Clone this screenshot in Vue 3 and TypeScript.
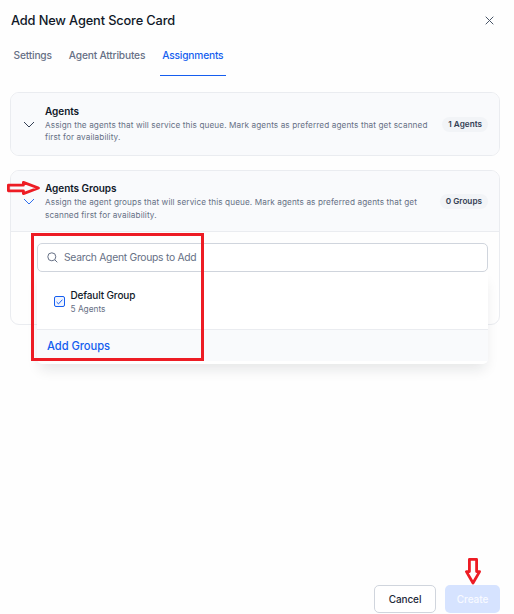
<script setup lang="ts">
import { ref } from 'vue'

const tabs = ['Settings', 'Agent Attributes', 'Assignments']
const activeTab = ref('Assignments')
const selected = ref(true)
</script>

<template>
  <main class="dialog">
    <header class="top">
      <h1>Add New Agent Score Card</h1>
      <button class="close" aria-label="Close">
        <svg width="9" height="9" viewBox="0 0 9 9"><path d="M.7.7l7.6 7.6M8.3.7L.7 8.3" /></svg>
      </button>
    </header>

    <nav class="tabs">
      <button
        v-for="tab in tabs"
        :key="tab"
        class="tab"
        :class="{ active: tab === activeTab }"
        @click="activeTab = tab"
      >{{ tab }}</button>
    </nav>

    <section class="card agents">
      <div class="card-head">
        <svg class="chevron" width="12" height="7" viewBox="0 0 12 7"><path d="M1 1l5 5 5-5" /></svg>
        <div class="info">
          <h2>Agents</h2>
          <p>Assign the agents that will service this queue. Mark agents as preferred agents that get scanned<br />first for availability.</p>
        </div>
        <span class="badge">1 Agents</span>
      </div>
    </section>

    <section class="card groups">
      <div class="card-head">
        <svg class="chevron" width="12" height="7" viewBox="0 0 12 7"><path d="M1 1l5 5 5-5" /></svg>
        <div class="info">
          <h2>Agents Groups</h2>
          <p>Assign the agent groups that will service this queue. Mark agents as preferred agents that get<br />scanned first for availability.</p>
        </div>
        <span class="badge">0 Groups</span>
      </div>
      <div class="card-body">
        <div class="search">
          <svg width="11" height="11" viewBox="0 0 11 11"><circle cx="4.8" cy="4.8" r="4" /><path d="M7.8 7.8l2.5 2.5" /></svg>
          <span>Search Agent Groups to Add</span>
        </div>
        <div class="menu">
          <div class="option" @click="selected = !selected">
            <span class="check">
              <svg v-if="selected" width="7" height="6" viewBox="0 0 7 6"><path d="M.6 3l1.900 1.900L6.400.7" /></svg>
            </span>
            <div>
              <div class="name">Default Group</div>
              <div class="count">5 Agents</div>
            </div>
          </div>
          <div class="menu-foot"><span>Add Groups</span></div>
        </div>
      </div>
    </section>

    <footer class="actions">
      <button class="btn cancel">Cancel</button>
      <button class="btn create" disabled>Create</button>
    </footer>

    <div class="mark-box"></div>
    <svg class="mark-right" width="35" height="16" viewBox="0 0 35 16"><path d="M2.400 5.200h15V2.400L32.500 8l-15.100 5.600v-2.800h-15z" /></svg>
    <svg class="mark-down" width="18" height="29" viewBox="0 0 18 29"><path d="M5.400 2.400h7.200v12.200H15.600L9 26 2.400 14.600h3z" /></svg>
  </main>
</template>

<style>
body {
  background: #fefefe;
}
</style>

<style scoped>
* {
  box-sizing: border-box;
}
.dialog {
  position: relative;
  display: flex;
  flex-direction: column;
  height: 614px;
  padding: 0 14px 1px 10px;
  overflow: hidden;
  font-family: Inter, 'Liberation Sans', sans-serif;
  color: #101828;
}
h1, h2, p {
  margin: 0;
}
button {
  padding: 0;
  border: 0;
  background: none;
  font-family: inherit;
}
svg {
  display: block;
  flex: none;
  fill: none;
  stroke: currentColor;
}
.top {
  display: flex;
  align-items: center;
  justify-content: space-between;
  height: 40px;
  padding-right: 6px;
}
h1 {
  padding: 2px 0 0 1px;
  font-size: 12.8px;
  font-weight: 500;
  line-height: 20px;
  letter-spacing: -0.14px;
}
.close {
  color: #475467;
}
.tabs {
  display: flex;
  gap: 12px;
  height: 36px;
  padding-left: 1px;
}
.tab {
  height: 36px;
  padding: 0 2.5px 5px;
  border-bottom: 1px solid transparent;
  font-size: 10.2px;
  font-weight: 500;
  letter-spacing: -0.18px;
  color: #667085;
}
.tab.active {
  border-color: #155eef;
  color: #155eef;
}
.card {
  width: 490px;
  border: 1px solid #eaecf0;
  border-radius: 9px;
}
.agents {
  height: 64px;
  margin-top: 16px;
}
.groups {
  height: 155px;
  margin-top: 14px;
}
.card-head {
  display: flex;
  align-items: center;
  height: 62px;
  padding: 0 11px 0 12px;
  background: #f9fafc;
  border-radius: 8px;
}
.groups .card-head {
  height: 61px;
  border-bottom: 1px solid #eaecf0;
  border-radius: 8px 8px 0 0;
}
.chevron {
  color: #344054;
}
.groups .chevron {
  color: #2f6fed;
}
.info {
  flex: 1;
  padding-left: 10px;
  white-space: nowrap;
}
.groups .info {
  padding-top: 1px;
}
h2 {
  margin: -1px 0 1px;
  font-size: 10px;
  font-weight: 600;
  line-height: 14px;
  letter-spacing: -0.05px;
}
p {
  font-size: 8.2px;
  line-height: 13px;
  letter-spacing: 0.1px;
  color: #667085;
}
.agents p {
  line-height: 12px;
}
.badge {
  height: 15px;
  padding: 0 6px;
  border-radius: 8px;
  background: #f2f4f7;
  font-size: 8.2px;
  font-weight: 600;
  line-height: 15px;
  color: #344054;
  white-space: nowrap;
}
.card-body {
  padding: 11px 11px 0 26px;
}
.search {
  display: flex;
  align-items: center;
  gap: 6px;
  height: 29px;
  padding: 0 0 1px 9px;
  border: 1px solid #d0d5dd;
  border-radius: 5px;
  background: #fff;
  font-size: 10.3px;
  letter-spacing: -0.26px;
  color: #667085;
}
.menu {
  position: relative;
  height: 92px;
  border-radius: 0 0 5px 5px;
  background: #fff;
  box-shadow: 0 8px 14px -3px rgba(16, 24, 40, 0.11);
}
.option {
  display: flex;
  align-items: center;
  gap: 5.5px;
  height: 57px;
  padding: 3px 0 0 17px;
}
.check {
  display: grid;
  place-items: center;
  width: 11px;
  height: 11px;
  margin-bottom: 1px;
  border: 1px solid #155eef;
  border-radius: 2px;
  background: #eff4ff;
  color: #155eef;
}
.name {
  margin: -1px 0 1px;
  font-size: 10px;
  font-weight: 500;
  line-height: 14px;
  letter-spacing: -0.14px;
}
.count {
  font-size: 8.3px;
  line-height: 13px;
  color: #667085;
}
.menu-foot {
  height: 32px;
  padding-left: 10px;
  border-top: 1px solid #eaecf0;
  background: #f9fafc;
  font-size: 11.2px;
  font-weight: 500;
  line-height: 33px;
  letter-spacing: -0.05px;
  color: #155eef;
}
.actions {
  display: flex;
  justify-content: flex-end;
  gap: 9px;
  margin-top: auto;
}
.btn {
  height: 28px;
  border-radius: 5px;
  font-size: 10px;
  font-weight: 500;
  letter-spacing: -0.08px;
}
.cancel {
  width: 62px;
  border: 1px solid #d0d5dd;
  background: #fff;
  color: #1d2939;
}
.create {
  width: 55px;
  background: #d6e3ff;
  color: #f8faff;
}
.mark-box {
  position: absolute;
  top: 233px;
  left: 31px;
  width: 173px;
  height: 128px;
  border: 3px solid #ed1c24;
  pointer-events: none;
}
.mark-right,
.mark-down {
  position: absolute;
  color: #ed1c24;
  stroke-width: 2.8;
  stroke-linejoin: round;
}
.mark-right {
  top: 180px;
  left: 6px;
}
.mark-down {
  top: 557px;
  left: 464px;
}
</style>
